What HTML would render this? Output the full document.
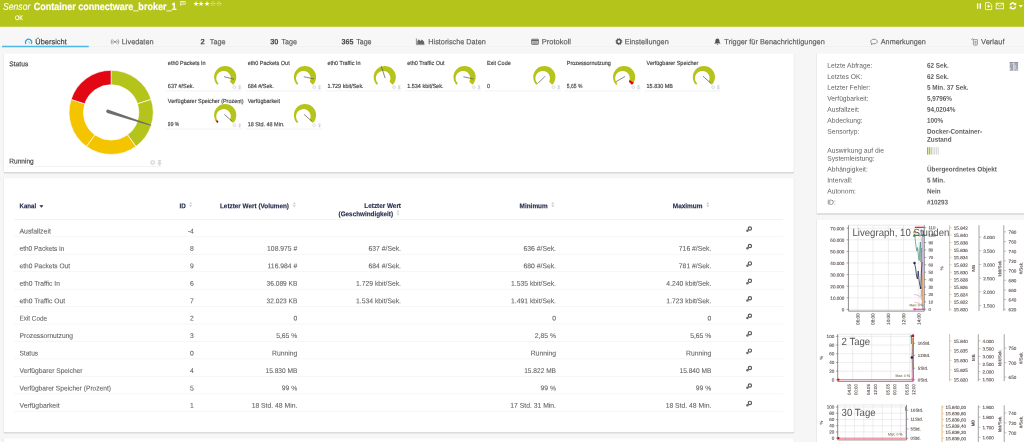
<!DOCTYPE html>
<html lang="de">
<head>
<meta charset="utf-8">
<title>Sensor Container connectware_broker_1</title>
<style>
html,body{margin:0;padding:0;}
body{width:1024px;height:442px;overflow:hidden;background:#f6f6f6;font-family:"Liberation Sans",sans-serif;position:relative;-webkit-text-size-adjust:none;}
#app{position:absolute;left:0;top:0;width:1024px;height:442px;overflow:hidden;will-change:transform;}
#app svg{position:absolute;left:0;top:0;overflow:hidden;}
svg text{font-family:"Liberation Sans",sans-serif;}
</style>
</head>
<body>
<div id="app">
<div class="surfaces"><svg width="1024" height="442" viewBox="0 0 1024 442"><rect x="0.00" y="0.00" width="1024.00" height="26.90" fill="#b5c41b"/><rect x="0.00" y="26.90" width="1024.00" height="19.90" fill="#f7f7f7"/><rect x="0.00" y="46.40" width="1024.00" height="0.70" fill="#efefef"/><rect x="2.00" y="45.75" width="86.80" height="1.50" fill="#4db8e8"/><rect x="3.30" y="53.40" width="791.20" height="119.40" fill="#000" opacity="0.035" rx="0.6"/><rect x="3.80" y="54.10" width="790.20" height="119.40" fill="#000" opacity="0.12" rx="0.5"/><rect x="4.00" y="53.60" width="789.80" height="118.50" fill="#fff"/><rect x="3.30" y="177.90" width="791.20" height="255.00" fill="#000" opacity="0.035" rx="0.6"/><rect x="3.80" y="178.60" width="790.20" height="255.00" fill="#000" opacity="0.12" rx="0.5"/><rect x="4.00" y="178.10" width="789.80" height="254.10" fill="#fff"/><rect x="3.30" y="438.20" width="791.20" height="20.90" fill="#000" opacity="0.035" rx="0.6"/><rect x="3.80" y="438.90" width="790.20" height="20.90" fill="#000" opacity="0.12" rx="0.5"/><rect x="4.00" y="438.40" width="789.80" height="20.00" fill="#fff"/><rect x="816.20" y="53.40" width="216.40" height="160.60" fill="#000" opacity="0.035" rx="0.6"/><rect x="816.70" y="54.10" width="215.40" height="160.60" fill="#000" opacity="0.12" rx="0.5"/><rect x="816.90" y="53.60" width="215.00" height="159.70" fill="#fff"/><rect x="816.20" y="219.35" width="216.40" height="230.90" fill="#000" opacity="0.035" rx="0.6"/><rect x="816.70" y="220.05" width="215.40" height="230.90" fill="#000" opacity="0.12" rx="0.5"/><rect x="816.90" y="219.55" width="215.00" height="230.00" fill="#fff"/><rect x="7.00" y="166.10" width="155.40" height="0.70" fill="#eeeeee"/><rect x="166.00" y="90.50" width="76.00" height="0.80" fill="#efefef"/><rect x="245.78" y="90.50" width="76.00" height="0.80" fill="#efefef"/><rect x="325.56" y="90.50" width="76.00" height="0.80" fill="#efefef"/><rect x="405.34" y="90.50" width="76.00" height="0.80" fill="#efefef"/><rect x="485.12" y="90.50" width="76.00" height="0.80" fill="#efefef"/><rect x="564.90" y="90.50" width="76.00" height="0.80" fill="#efefef"/><rect x="644.68" y="90.50" width="76.00" height="0.80" fill="#efefef"/><rect x="166.00" y="128.65" width="76.00" height="0.80" fill="#efefef"/><rect x="245.78" y="128.65" width="76.00" height="0.80" fill="#efefef"/><rect x="14.00" y="219.10" width="769.00" height="0.60" fill="#ebebeb"/><rect x="14.00" y="236.49" width="769.00" height="0.70" fill="#f2f2f2"/><rect x="14.00" y="253.93" width="769.00" height="0.70" fill="#f2f2f2"/><rect x="14.00" y="271.37" width="769.00" height="0.70" fill="#f2f2f2"/><rect x="14.00" y="288.81" width="769.00" height="0.70" fill="#f2f2f2"/><rect x="14.00" y="306.25" width="769.00" height="0.70" fill="#f2f2f2"/><rect x="14.00" y="323.69" width="769.00" height="0.70" fill="#f2f2f2"/><rect x="14.00" y="341.13" width="769.00" height="0.70" fill="#f2f2f2"/><rect x="14.00" y="358.57" width="769.00" height="0.70" fill="#f2f2f2"/><rect x="14.00" y="376.01" width="769.00" height="0.70" fill="#f2f2f2"/><rect x="14.00" y="393.45" width="769.00" height="0.70" fill="#f2f2f2"/><rect x="14.00" y="410.89" width="769.00" height="0.70" fill="#f2f2f2"/><rect x="927.00" y="147.20" width="1.20" height="7.40" fill="#9cbb1c"/><rect x="928.78" y="147.20" width="1.20" height="7.40" fill="#a9c332"/><rect x="930.56" y="147.20" width="1.20" height="7.40" fill="#b9cf5c"/><rect x="932.34" y="147.20" width="1.20" height="7.40" fill="#d9d9d9"/><rect x="934.12" y="147.20" width="1.20" height="7.40" fill="#d9d9d9"/><rect x="935.90" y="147.20" width="1.20" height="7.40" fill="#d9d9d9"/><rect x="937.68" y="147.20" width="1.20" height="7.40" fill="#d9d9d9"/></svg></div>
<header><svg width="1024" height="442" viewBox="0 0 1024 442">
<text transform="translate(3.10 9.83) rotate(0.03) scale(0.8942 1)" font-size="9.6" fill="#fff" font-style="italic" stroke="#fff" stroke-width="0.12">Sensor</text>
<text transform="translate(33.70 10.37) rotate(0.03) scale(0.8759 1)" font-size="10.3" fill="#fff" font-weight="700" stroke="#fff" stroke-width="0.2">Container connectware_broker_1</text>
<text transform="translate(14.90 20.42) rotate(0.03) scale(0.8651 1)" font-size="6.4" fill="#fff" stroke="#fff" stroke-width="0.15">OK</text>
</svg></header>
<nav><svg width="1024" height="442" viewBox="0 0 1024 442">
<text transform="translate(35.30 44.23) rotate(0.03) scale(0.9813 1)" font-size="7.6" fill="#3a3a3a" stroke="#3a3a3a" stroke-width="0.16">Übersicht</text>
<text transform="translate(121.80 44.23) rotate(0.03) scale(0.9632 1)" font-size="7.6" fill="#5a5a5a" stroke="#5a5a5a" stroke-width="0.16">Livedaten</text>
<text transform="translate(209.80 44.23) rotate(0.03) scale(0.9557 1)" font-size="7.6" fill="#5a5a5a" stroke="#5a5a5a" stroke-width="0.16">Tage</text>
<text transform="translate(200.50 44.23) rotate(0.03) scale(1.0000 1)" font-size="7.6" fill="#4a4a4a" font-weight="700" stroke="#4a4a4a" stroke-width="0.12">2</text>
<text transform="translate(281.55 44.23) rotate(0.03) scale(0.9405 1)" font-size="7.6" fill="#5a5a5a" stroke="#5a5a5a" stroke-width="0.16">Tage</text>
<text transform="translate(270.25 44.23) rotate(0.03) scale(0.9759 1)" font-size="7.6" fill="#4a4a4a" font-weight="700" stroke="#4a4a4a" stroke-width="0.12">30</text>
<text transform="translate(356.30 44.23) rotate(0.03) scale(0.9253 1)" font-size="7.6" fill="#5a5a5a" stroke="#5a5a5a" stroke-width="0.16">Tage</text>
<text transform="translate(341.50 44.23) rotate(0.03) scale(0.9463 1)" font-size="7.6" fill="#4a4a4a" font-weight="700" stroke="#4a4a4a" stroke-width="0.12">365</text>
<text transform="translate(428.30 44.23) rotate(0.03) scale(0.9586 1)" font-size="7.6" fill="#5a5a5a" stroke="#5a5a5a" stroke-width="0.16">Historische Daten</text>
<text transform="translate(541.80 44.23) rotate(0.03) scale(0.9892 1)" font-size="7.6" fill="#5a5a5a" stroke="#5a5a5a" stroke-width="0.16">Protokoll</text>
<text transform="translate(624.80 44.23) rotate(0.03) scale(0.9642 1)" font-size="7.6" fill="#5a5a5a" stroke="#5a5a5a" stroke-width="0.16">Einstellungen</text>
<text transform="translate(724.30 44.23) rotate(0.03) scale(0.9657 1)" font-size="7.6" fill="#5a5a5a" stroke="#5a5a5a" stroke-width="0.16">Trigger für Benachrichtigungen</text>
<text transform="translate(880.80 44.23) rotate(0.03) scale(0.9510 1)" font-size="7.6" fill="#5a5a5a" stroke="#5a5a5a" stroke-width="0.16">Anmerkungen</text>
<text transform="translate(981.05 44.23) rotate(0.03) scale(0.9931 1)" font-size="7.6" fill="#5a5a5a" stroke="#5a5a5a" stroke-width="0.16">Verlauf</text>
</svg></nav>
<main>
<section class="status"><svg width="1024" height="442" viewBox="0 0 1024 442">
<text transform="translate(9.30 66.30) rotate(0.03) scale(0.9671 1)" font-size="6.93" fill="#404040" stroke="#404040" stroke-width="0.16">Status</text>
<text transform="translate(9.30 163.40) rotate(0.03) scale(0.9490 1)" font-size="6.93" fill="#404040" stroke="#404040" stroke-width="0.16">Running</text>
</svg></section>
<section class="gauges"><svg width="1024" height="442" viewBox="0 0 1024 442">
<text transform="translate(167.85 64.94) rotate(0.03) scale(0.9300 1)" font-size="5.9" fill="#404040" stroke="#404040" stroke-width="0.16">eth0 Packets In</text>
<text transform="translate(167.85 88.04) rotate(0.03) scale(0.9300 1)" font-size="5.9" fill="#404040" stroke="#404040" stroke-width="0.16">637 #/Sek.</text>
<text transform="translate(247.63 64.94) rotate(0.03) scale(0.9300 1)" font-size="5.9" fill="#404040" stroke="#404040" stroke-width="0.16">eth0 Packets Out</text>
<text transform="translate(247.63 88.04) rotate(0.03) scale(0.9300 1)" font-size="5.9" fill="#404040" stroke="#404040" stroke-width="0.16">684 #/Sek.</text>
<text transform="translate(327.41 64.94) rotate(0.03) scale(0.9300 1)" font-size="5.9" fill="#404040" stroke="#404040" stroke-width="0.16">eth0 Traffic In</text>
<text transform="translate(327.41 88.04) rotate(0.03) scale(0.9300 1)" font-size="5.9" fill="#404040" stroke="#404040" stroke-width="0.16">1.729 kbit/Sek.</text>
<text transform="translate(407.19 64.94) rotate(0.03) scale(0.9300 1)" font-size="5.9" fill="#404040" stroke="#404040" stroke-width="0.16">eth0 Traffic Out</text>
<text transform="translate(407.19 88.04) rotate(0.03) scale(0.9300 1)" font-size="5.9" fill="#404040" stroke="#404040" stroke-width="0.16">1.534 kbit/Sek.</text>
<text transform="translate(486.97 64.94) rotate(0.03) scale(0.9300 1)" font-size="5.9" fill="#404040" stroke="#404040" stroke-width="0.16">Exit Code</text>
<text transform="translate(486.97 88.04) rotate(0.03) scale(0.9300 1)" font-size="5.9" fill="#404040" stroke="#404040" stroke-width="0.16">0</text>
<text transform="translate(566.75 64.94) rotate(0.03) scale(0.9300 1)" font-size="5.9" fill="#404040" stroke="#404040" stroke-width="0.16">Prozessornutzung</text>
<text transform="translate(566.75 88.04) rotate(0.03) scale(0.8500 1)" font-size="5.9" fill="#404040" stroke="#404040" stroke-width="0.16">5,65 %</text>
<text transform="translate(646.53 64.94) rotate(0.03) scale(0.9300 1)" font-size="5.9" fill="#404040" stroke="#404040" stroke-width="0.16">Verfügbarer Speicher</text>
<text transform="translate(646.53 88.04) rotate(0.03) scale(0.9300 1)" font-size="5.9" fill="#404040" stroke="#404040" stroke-width="0.16">15.830 MB</text>
<text transform="translate(167.85 103.09) rotate(0.03) scale(0.9300 1)" font-size="5.9" fill="#404040" stroke="#404040" stroke-width="0.16">Verfügbarer Speicher (Prozent)</text>
<text transform="translate(167.85 126.19) rotate(0.03) scale(0.8500 1)" font-size="5.9" fill="#404040" stroke="#404040" stroke-width="0.16">99 %</text>
<text transform="translate(247.63 103.09) rotate(0.03) scale(0.9300 1)" font-size="5.9" fill="#404040" stroke="#404040" stroke-width="0.16">Verfügbarkeit</text>
<text transform="translate(247.63 126.19) rotate(0.03) scale(0.9300 1)" font-size="5.9" fill="#404040" stroke="#404040" stroke-width="0.16">18 Std. 48 Min.</text>
</svg></section>
<section class="channels"><svg width="1024" height="442" viewBox="0 0 1024 442">
<text transform="translate(19.50 208.35) rotate(0.03) scale(0.8876 1)" font-size="6.93" fill="#222a4a" font-weight="700" stroke="#222a4a" stroke-width="0.12">Kanal</text>
<text transform="translate(185.75 208.35) rotate(0.03) scale(0.9019 1)" font-size="6.93" fill="#222a4a" font-weight="700" stroke="#222a4a" stroke-width="0.12" text-anchor="end">ID</text>
<text transform="translate(289.00 208.35) rotate(0.03) scale(0.9200 1)" font-size="6.93" fill="#222a4a" font-weight="700" stroke="#222a4a" stroke-width="0.12" text-anchor="end">Letzter Wert (Volumen)</text>
<text transform="translate(401.00 208.00) rotate(0.03) scale(0.9200 1)" font-size="6.93" fill="#222a4a" font-weight="700" stroke="#222a4a" stroke-width="0.12" text-anchor="end">Letzter Wert</text>
<text transform="translate(393.00 216.25) rotate(0.03) scale(0.9131 1)" font-size="6.93" fill="#222a4a" font-weight="700" stroke="#222a4a" stroke-width="0.12" text-anchor="end">(Geschwindigkeit)</text>
<text transform="translate(547.75 208.35) rotate(0.03) scale(0.9289 1)" font-size="6.93" fill="#222a4a" font-weight="700" stroke="#222a4a" stroke-width="0.12" text-anchor="end">Minimum</text>
<text transform="translate(702.50 208.35) rotate(0.03) scale(0.9307 1)" font-size="6.93" fill="#222a4a" font-weight="700" stroke="#222a4a" stroke-width="0.12" text-anchor="end">Maximum</text>
<text transform="translate(19.50 233.42) rotate(0.03) scale(0.9941 1)" font-size="6.93" fill="#626262" stroke="#626262" stroke-width="0.08">Ausfallzeit</text>
<text transform="translate(193.90 233.42) rotate(0.03) scale(0.9800 1)" font-size="6.93" fill="#626262" stroke="#626262" stroke-width="0.08" text-anchor="end">-4</text>
<text transform="translate(19.50 250.86) rotate(0.03) scale(0.9441 1)" font-size="6.93" fill="#626262" stroke="#626262" stroke-width="0.08">eth0 Packets In</text>
<text transform="translate(193.90 250.86) rotate(0.03) scale(0.9800 1)" font-size="6.93" fill="#626262" stroke="#626262" stroke-width="0.08" text-anchor="end">8</text>
<text transform="translate(297.30 250.86) rotate(0.03) scale(0.9800 1)" font-size="6.93" fill="#626262" stroke="#626262" stroke-width="0.08" text-anchor="end">108.975 #</text>
<text transform="translate(401.00 250.86) rotate(0.03) scale(0.9800 1)" font-size="6.93" fill="#626262" stroke="#626262" stroke-width="0.08" text-anchor="end">637 #/Sek.</text>
<text transform="translate(556.00 250.86) rotate(0.03) scale(0.9800 1)" font-size="6.93" fill="#626262" stroke="#626262" stroke-width="0.08" text-anchor="end">636 #/Sek.</text>
<text transform="translate(711.30 250.86) rotate(0.03) scale(0.9800 1)" font-size="6.93" fill="#626262" stroke="#626262" stroke-width="0.08" text-anchor="end">716 #/Sek.</text>
<text transform="translate(19.50 268.30) rotate(0.03) scale(0.9519 1)" font-size="6.93" fill="#626262" stroke="#626262" stroke-width="0.08">eth0 Packets Out</text>
<text transform="translate(193.90 268.30) rotate(0.03) scale(0.9800 1)" font-size="6.93" fill="#626262" stroke="#626262" stroke-width="0.08" text-anchor="end">9</text>
<text transform="translate(297.30 268.30) rotate(0.03) scale(0.9800 1)" font-size="6.93" fill="#626262" stroke="#626262" stroke-width="0.08" text-anchor="end">116.984 #</text>
<text transform="translate(401.00 268.30) rotate(0.03) scale(0.9800 1)" font-size="6.93" fill="#626262" stroke="#626262" stroke-width="0.08" text-anchor="end">684 #/Sek.</text>
<text transform="translate(556.00 268.30) rotate(0.03) scale(0.9800 1)" font-size="6.93" fill="#626262" stroke="#626262" stroke-width="0.08" text-anchor="end">680 #/Sek.</text>
<text transform="translate(711.30 268.30) rotate(0.03) scale(0.9800 1)" font-size="6.93" fill="#626262" stroke="#626262" stroke-width="0.08" text-anchor="end">781 #/Sek.</text>
<text transform="translate(19.50 285.74) rotate(0.03) scale(0.9675 1)" font-size="6.93" fill="#626262" stroke="#626262" stroke-width="0.08">eth0 Traffic In</text>
<text transform="translate(193.90 285.74) rotate(0.03) scale(0.9800 1)" font-size="6.93" fill="#626262" stroke="#626262" stroke-width="0.08" text-anchor="end">6</text>
<text transform="translate(297.30 285.74) rotate(0.03) scale(0.9500 1)" font-size="6.93" fill="#626262" stroke="#626262" stroke-width="0.08" text-anchor="end">36.089 KB</text>
<text transform="translate(401.00 285.74) rotate(0.03) scale(0.9800 1)" font-size="6.93" fill="#626262" stroke="#626262" stroke-width="0.08" text-anchor="end">1.729 kbit/Sek.</text>
<text transform="translate(556.00 285.74) rotate(0.03) scale(0.9800 1)" font-size="6.93" fill="#626262" stroke="#626262" stroke-width="0.08" text-anchor="end">1.535 kbit/Sek.</text>
<text transform="translate(711.30 285.74) rotate(0.03) scale(0.9800 1)" font-size="6.93" fill="#626262" stroke="#626262" stroke-width="0.08" text-anchor="end">4.240 kbit/Sek.</text>
<text transform="translate(19.50 303.18) rotate(0.03) scale(0.9650 1)" font-size="6.93" fill="#626262" stroke="#626262" stroke-width="0.08">eth0 Traffic Out</text>
<text transform="translate(193.90 303.18) rotate(0.03) scale(0.9800 1)" font-size="6.93" fill="#626262" stroke="#626262" stroke-width="0.08" text-anchor="end">7</text>
<text transform="translate(297.30 303.18) rotate(0.03) scale(0.9500 1)" font-size="6.93" fill="#626262" stroke="#626262" stroke-width="0.08" text-anchor="end">32.023 KB</text>
<text transform="translate(401.00 303.18) rotate(0.03) scale(0.9800 1)" font-size="6.93" fill="#626262" stroke="#626262" stroke-width="0.08" text-anchor="end">1.534 kbit/Sek.</text>
<text transform="translate(556.00 303.18) rotate(0.03) scale(0.9800 1)" font-size="6.93" fill="#626262" stroke="#626262" stroke-width="0.08" text-anchor="end">1.491 kbit/Sek.</text>
<text transform="translate(711.30 303.18) rotate(0.03) scale(0.9800 1)" font-size="6.93" fill="#626262" stroke="#626262" stroke-width="0.08" text-anchor="end">1.723 kbit/Sek.</text>
<text transform="translate(19.50 320.62) rotate(0.03) scale(0.9186 1)" font-size="6.93" fill="#626262" stroke="#626262" stroke-width="0.08">Exit Code</text>
<text transform="translate(193.90 320.62) rotate(0.03) scale(0.9800 1)" font-size="6.93" fill="#626262" stroke="#626262" stroke-width="0.08" text-anchor="end">2</text>
<text transform="translate(297.30 320.62) rotate(0.03) scale(0.9800 1)" font-size="6.93" fill="#626262" stroke="#626262" stroke-width="0.08" text-anchor="end">0</text>
<text transform="translate(556.00 320.62) rotate(0.03) scale(0.9800 1)" font-size="6.93" fill="#626262" stroke="#626262" stroke-width="0.08" text-anchor="end">0</text>
<text transform="translate(711.30 320.62) rotate(0.03) scale(0.9800 1)" font-size="6.93" fill="#626262" stroke="#626262" stroke-width="0.08" text-anchor="end">0</text>
<text transform="translate(19.50 338.06) rotate(0.03) scale(0.9596 1)" font-size="6.93" fill="#626262" stroke="#626262" stroke-width="0.08">Prozessornutzung</text>
<text transform="translate(193.90 338.06) rotate(0.03) scale(0.9800 1)" font-size="6.93" fill="#626262" stroke="#626262" stroke-width="0.08" text-anchor="end">3</text>
<text transform="translate(297.30 338.06) rotate(0.03) scale(0.9800 1)" font-size="6.93" fill="#626262" stroke="#626262" stroke-width="0.08" text-anchor="end">5,65 %</text>
<text transform="translate(556.00 338.06) rotate(0.03) scale(0.9800 1)" font-size="6.93" fill="#626262" stroke="#626262" stroke-width="0.08" text-anchor="end">2,85 %</text>
<text transform="translate(711.30 338.06) rotate(0.03) scale(0.9800 1)" font-size="6.93" fill="#626262" stroke="#626262" stroke-width="0.08" text-anchor="end">5,65 %</text>
<text transform="translate(19.50 355.50) rotate(0.03) scale(0.9467 1)" font-size="6.93" fill="#626262" stroke="#626262" stroke-width="0.08">Status</text>
<text transform="translate(193.90 355.50) rotate(0.03) scale(0.9800 1)" font-size="6.93" fill="#626262" stroke="#626262" stroke-width="0.08" text-anchor="end">0</text>
<text transform="translate(297.30 355.50) rotate(0.03) scale(0.9800 1)" font-size="6.93" fill="#626262" stroke="#626262" stroke-width="0.08" text-anchor="end">Running</text>
<text transform="translate(556.00 355.50) rotate(0.03) scale(0.9800 1)" font-size="6.93" fill="#626262" stroke="#626262" stroke-width="0.08" text-anchor="end">Running</text>
<text transform="translate(711.30 355.50) rotate(0.03) scale(0.9800 1)" font-size="6.93" fill="#626262" stroke="#626262" stroke-width="0.08" text-anchor="end">Running</text>
<text transform="translate(19.50 372.94) rotate(0.03) scale(0.9635 1)" font-size="6.93" fill="#626262" stroke="#626262" stroke-width="0.08">Verfügbarer Speicher</text>
<text transform="translate(193.90 372.94) rotate(0.03) scale(0.9800 1)" font-size="6.93" fill="#626262" stroke="#626262" stroke-width="0.08" text-anchor="end">4</text>
<text transform="translate(297.30 372.94) rotate(0.03) scale(0.9500 1)" font-size="6.93" fill="#626262" stroke="#626262" stroke-width="0.08" text-anchor="end">15.830 MB</text>
<text transform="translate(556.00 372.94) rotate(0.03) scale(0.9500 1)" font-size="6.93" fill="#626262" stroke="#626262" stroke-width="0.08" text-anchor="end">15.822 MB</text>
<text transform="translate(711.30 372.94) rotate(0.03) scale(0.9500 1)" font-size="6.93" fill="#626262" stroke="#626262" stroke-width="0.08" text-anchor="end">15.840 MB</text>
<text transform="translate(19.50 390.38) rotate(0.03) scale(0.9550 1)" font-size="6.93" fill="#626262" stroke="#626262" stroke-width="0.08">Verfügbarer Speicher (Prozent)</text>
<text transform="translate(193.90 390.38) rotate(0.03) scale(0.9800 1)" font-size="6.93" fill="#626262" stroke="#626262" stroke-width="0.08" text-anchor="end">5</text>
<text transform="translate(297.30 390.38) rotate(0.03) scale(0.9800 1)" font-size="6.93" fill="#626262" stroke="#626262" stroke-width="0.08" text-anchor="end">99 %</text>
<text transform="translate(556.00 390.38) rotate(0.03) scale(0.9800 1)" font-size="6.93" fill="#626262" stroke="#626262" stroke-width="0.08" text-anchor="end">99 %</text>
<text transform="translate(711.30 390.38) rotate(0.03) scale(0.9800 1)" font-size="6.93" fill="#626262" stroke="#626262" stroke-width="0.08" text-anchor="end">99 %</text>
<text transform="translate(19.50 407.82) rotate(0.03) scale(0.9819 1)" font-size="6.93" fill="#626262" stroke="#626262" stroke-width="0.08">Verfügbarkeit</text>
<text transform="translate(193.90 407.82) rotate(0.03) scale(0.9800 1)" font-size="6.93" fill="#626262" stroke="#626262" stroke-width="0.08" text-anchor="end">1</text>
<text transform="translate(297.30 407.82) rotate(0.03) scale(0.9800 1)" font-size="6.93" fill="#626262" stroke="#626262" stroke-width="0.08" text-anchor="end">18 Std. 48 Min.</text>
<text transform="translate(556.00 407.82) rotate(0.03) scale(0.9800 1)" font-size="6.93" fill="#626262" stroke="#626262" stroke-width="0.08" text-anchor="end">17 Std. 31 Min.</text>
<text transform="translate(711.30 407.82) rotate(0.03) scale(0.9800 1)" font-size="6.93" fill="#626262" stroke="#626262" stroke-width="0.08" text-anchor="end">18 Std. 48 Min.</text>
</svg></section>
</main>
<aside class="info"><svg width="1024" height="442" viewBox="0 0 1024 442">
<text transform="translate(827.20 67.75) rotate(0.03) scale(0.9700 1)" font-size="6.93" fill="#646464">Letzte Abfrage:</text>
<text transform="translate(927.00 67.75) rotate(0.03) scale(0.9150 1)" font-size="6.93" fill="#5e5e5e" font-weight="700">62 Sek.</text>
<text transform="translate(827.20 78.95) rotate(0.03) scale(0.9700 1)" font-size="6.93" fill="#646464">Letztes OK:</text>
<text transform="translate(927.00 78.95) rotate(0.03) scale(0.9150 1)" font-size="6.93" fill="#5e5e5e" font-weight="700">62 Sek.</text>
<text transform="translate(827.20 89.85) rotate(0.03) scale(0.9700 1)" font-size="6.93" fill="#646464">Letzter Fehler:</text>
<text transform="translate(927.00 89.85) rotate(0.03) scale(0.9150 1)" font-size="6.93" fill="#5e5e5e" font-weight="700">5 Min. 37 Sek.</text>
<text transform="translate(827.20 100.85) rotate(0.03) scale(0.9700 1)" font-size="6.93" fill="#646464">Verfügbarkeit:</text>
<text transform="translate(927.00 100.85) rotate(0.03) scale(0.9150 1)" font-size="6.93" fill="#5e5e5e" font-weight="700">5,9796%</text>
<text transform="translate(827.20 111.75) rotate(0.03) scale(0.9700 1)" font-size="6.93" fill="#646464">Ausfallzeit:</text>
<text transform="translate(927.00 111.75) rotate(0.03) scale(0.9150 1)" font-size="6.93" fill="#5e5e5e" font-weight="700">94,0204%</text>
<text transform="translate(827.20 122.75) rotate(0.03) scale(0.9700 1)" font-size="6.93" fill="#646464">Abdeckung:</text>
<text transform="translate(927.00 122.75) rotate(0.03) scale(0.9150 1)" font-size="6.93" fill="#5e5e5e" font-weight="700">100%</text>
<text transform="translate(827.20 133.65) rotate(0.03) scale(0.9700 1)" font-size="6.93" fill="#646464">Sensortyp:</text>
<text transform="translate(927.00 133.65) rotate(0.03) scale(0.9150 1)" font-size="6.93" fill="#5e5e5e" font-weight="700">Docker-Container-</text>
<text transform="translate(927.00 141.75) rotate(0.03) scale(0.9150 1)" font-size="6.93" fill="#5e5e5e" font-weight="700">Zustand</text>
<text transform="translate(827.20 152.75) rotate(0.03) scale(0.9700 1)" font-size="6.93" fill="#646464">Auswirkung auf die</text>
<text transform="translate(827.20 160.85) rotate(0.03) scale(0.9700 1)" font-size="6.93" fill="#646464">Systemleistung:</text>
<text transform="translate(827.20 171.55) rotate(0.03) scale(0.9700 1)" font-size="6.93" fill="#646464">Abhängigkeit:</text>
<text transform="translate(927.00 171.55) rotate(0.03) scale(0.9150 1)" font-size="6.93" fill="#5e5e5e" font-weight="700">Übergeordnetes Objekt</text>
<text transform="translate(827.20 182.55) rotate(0.03) scale(0.9700 1)" font-size="6.93" fill="#646464">Intervall:</text>
<text transform="translate(927.00 182.55) rotate(0.03) scale(0.9150 1)" font-size="6.93" fill="#5e5e5e" font-weight="700">5 Min.</text>
<text transform="translate(827.20 193.45) rotate(0.03) scale(0.9700 1)" font-size="6.93" fill="#646464">Autonom:</text>
<text transform="translate(927.00 193.45) rotate(0.03) scale(0.9150 1)" font-size="6.93" fill="#5e5e5e" font-weight="700">Nein</text>
<text transform="translate(827.20 204.45) rotate(0.03) scale(0.9700 1)" font-size="6.93" fill="#646464">ID:</text>
<text transform="translate(927.00 204.45) rotate(0.03) scale(0.9150 1)" font-size="6.93" fill="#5e5e5e" font-weight="700">#10293</text>
</svg></aside>
<div class="fav"><svg width="1024" height="442" viewBox="0 0 1024 442">
<text transform="translate(192.70 6.36) rotate(0.03) scale(1.0000 1)" font-size="6.8" fill="#fff" font-family="DejaVu Sans, sans-serif">★</text>
<text transform="translate(198.42 6.36) rotate(0.03) scale(1.0000 1)" font-size="6.8" fill="#fff" font-family="DejaVu Sans, sans-serif">★</text>
<text transform="translate(204.14 6.36) rotate(0.03) scale(1.0000 1)" font-size="6.8" fill="#fff" font-family="DejaVu Sans, sans-serif">★</text>
<text transform="translate(209.86 6.36) rotate(0.03) scale(1.0000 1)" font-size="6.8" fill="#fff" font-family="DejaVu Sans, sans-serif">☆</text>
<text transform="translate(215.58 6.36) rotate(0.03) scale(1.0000 1)" font-size="6.8" fill="#fff" font-family="DejaVu Sans, sans-serif">☆</text>
</svg></div>
<div class="graphics"><svg width="1024" height="442" viewBox="0 0 1024 442"><path d="M111.15 70.30A42.1 42.1 0 0 1 151.19 99.39L137.49 103.84A27.7 27.7 0 0 0 111.15 84.70Z" fill="#b5c41b" stroke="#fff" stroke-width="0.7"/><path d="M151.19 99.39A42.1 42.1 0 0 1 135.90 146.46L127.43 134.81A27.7 27.7 0 0 0 137.49 103.84Z" fill="#b5c41b" stroke="#fff" stroke-width="0.7"/><path d="M135.90 146.46A42.1 42.1 0 0 1 86.40 146.46L94.87 134.81A27.7 27.7 0 0 0 127.43 134.81Z" fill="#f5c400" stroke="#fff" stroke-width="0.7"/><path d="M86.40 146.46A42.1 42.1 0 0 1 71.11 99.39L84.81 103.84A27.7 27.7 0 0 0 94.87 134.81Z" fill="#f5c400" stroke="#fff" stroke-width="0.7"/><path d="M71.11 99.39A42.1 42.1 0 0 1 111.15 70.30L111.15 84.70A27.7 27.7 0 0 0 84.81 103.84Z" fill="#e30613" stroke="#fff" stroke-width="0.7"/><path d="M107.36 113.06L150.56 125.73L150.87 124.78L108.47 109.64A1.8 1.8 0 0 0 107.36 113.06Z" fill="#6e6e6e"/><circle cx="152.70" cy="162.50" r="1.70" fill="none" stroke="#d6d9e0" stroke-width="1.20"/><circle cx="152.70" cy="162.50" r="2.40" fill="none" stroke="#d6d9e0" stroke-width="0.60" stroke-dasharray="0.80 1.08"/><path d="M157.80 160.00h3.40v0.80h-0.50v2.20l0.90 0.90v0.50h-1.70v1.70h-0.80v-1.70h-1.70v-0.50l0.90 -0.90v-2.20h-0.50z" fill="#d6d9e0"/><path d="M217.35 84.85A11.1 11.1 0 1 1 233.05 84.85L229.99 81.79A7.35 7.35 0 1 0 218.56 83.64Z" fill="#b5c41b"/><line x1="224.04" y1="76.71" x2="234.13" y2="79.23" stroke="#484848" stroke-width="0.65"/><circle cx="234.40" cy="87.20" r="1.27" fill="none" stroke="#d6d9e0" stroke-width="0.90"/><circle cx="234.40" cy="87.20" r="1.80" fill="none" stroke="#d6d9e0" stroke-width="0.45" stroke-dasharray="0.60 0.81"/><path d="M238.38 85.33h2.55v0.60h-0.38v1.65l0.68 0.68v0.38h-1.27v1.27h-0.60v-1.27h-1.27v-0.38l0.68 -0.68v-1.65h-0.38z" fill="#d6d9e0"/><path d="M297.13 84.85A11.1 11.1 0 1 1 312.83 84.85L309.77 81.79A7.35 7.35 0 1 0 298.34 83.64Z" fill="#b5c41b"/><line x1="303.81" y1="76.75" x2="313.98" y2="78.91" stroke="#484848" stroke-width="0.65"/><circle cx="314.18" cy="87.20" r="1.27" fill="none" stroke="#d6d9e0" stroke-width="0.90"/><circle cx="314.18" cy="87.20" r="1.80" fill="none" stroke="#d6d9e0" stroke-width="0.45" stroke-dasharray="0.60 0.81"/><path d="M318.16 85.33h2.55v0.60h-0.38v1.65l0.68 0.68v0.38h-1.27v1.27h-0.60v-1.27h-1.27v-0.38l0.68 -0.68v-1.65h-0.38z" fill="#d6d9e0"/><path d="M376.91 84.85A11.1 11.1 0 1 1 392.61 84.85L389.55 81.79A7.35 7.35 0 1 0 378.12 83.64Z" fill="#b5c41b"/><line x1="385.13" y1="78.14" x2="381.30" y2="66.35" stroke="#484848" stroke-width="0.65"/><circle cx="393.96" cy="87.20" r="1.27" fill="none" stroke="#d6d9e0" stroke-width="0.90"/><circle cx="393.96" cy="87.20" r="1.80" fill="none" stroke="#d6d9e0" stroke-width="0.45" stroke-dasharray="0.60 0.81"/><path d="M397.94 85.33h2.55v0.60h-0.38v1.65l0.68 0.68v0.38h-1.27v1.27h-0.60v-1.27h-1.27v-0.38l0.68 -0.68v-1.65h-0.38z" fill="#d6d9e0"/><path d="M456.69 84.85A11.1 11.1 0 1 1 472.39 84.85L469.33 81.79A7.35 7.35 0 1 0 457.90 83.64Z" fill="#b5c41b"/><line x1="463.37" y1="76.75" x2="473.54" y2="78.91" stroke="#484848" stroke-width="0.65"/><circle cx="473.74" cy="87.20" r="1.27" fill="none" stroke="#d6d9e0" stroke-width="0.90"/><circle cx="473.74" cy="87.20" r="1.80" fill="none" stroke="#d6d9e0" stroke-width="0.45" stroke-dasharray="0.60 0.81"/><path d="M477.72 85.33h2.55v0.60h-0.38v1.65l0.68 0.68v0.38h-1.27v1.27h-0.60v-1.27h-1.27v-0.38l0.68 -0.68v-1.65h-0.38z" fill="#d6d9e0"/><path d="M536.47 84.85A11.1 11.1 0 1 1 552.17 84.85L549.11 81.79A7.35 7.35 0 1 0 537.68 83.64Z" fill="#b5c41b"/><line x1="545.17" y1="76.15" x2="537.81" y2="83.51" stroke="#484848" stroke-width="0.65"/><circle cx="553.52" cy="87.20" r="1.27" fill="none" stroke="#d6d9e0" stroke-width="0.90"/><circle cx="553.52" cy="87.20" r="1.80" fill="none" stroke="#d6d9e0" stroke-width="0.45" stroke-dasharray="0.60 0.81"/><path d="M557.50 85.33h2.55v0.60h-0.38v1.65l0.68 0.68v0.38h-1.27v1.27h-0.60v-1.27h-1.27v-0.38l0.68 -0.68v-1.65h-0.38z" fill="#d6d9e0"/><path d="M616.25 84.85A11.1 11.1 0 1 1 631.95 84.85L628.89 81.79A7.35 7.35 0 1 0 617.46 83.64Z" fill="#b5c41b"/><path d="M633.81 82.38A11.1 11.1 0 0 1 631.95 84.85L628.89 81.79A7.35 7.35 0 0 0 629.58 80.04Z" fill="#e30613"/><path d="M616.25 84.85A11.1 11.1 0 0 1 615.35 83.83L616.68 82.80A7.35 7.35 0 0 0 617.46 83.64Z" fill="#f5c400"/><line x1="625.14" y1="76.40" x2="616.13" y2="81.60" stroke="#484848" stroke-width="0.65"/><circle cx="633.30" cy="87.20" r="1.27" fill="none" stroke="#d6d9e0" stroke-width="0.90"/><circle cx="633.30" cy="87.20" r="1.80" fill="none" stroke="#d6d9e0" stroke-width="0.45" stroke-dasharray="0.60 0.81"/><path d="M637.27 85.33h2.55v0.60h-0.38v1.65l0.68 0.68v0.38h-1.27v1.27h-0.60v-1.27h-1.27v-0.38l0.68 -0.68v-1.65h-0.38z" fill="#d6d9e0"/><path d="M696.03 84.85A11.1 11.1 0 1 1 711.73 84.85L708.67 81.79A7.35 7.35 0 1 0 697.24 83.64Z" fill="#b5c41b"/><line x1="702.99" y1="76.20" x2="710.72" y2="83.16" stroke="#484848" stroke-width="0.65"/><circle cx="713.08" cy="87.20" r="1.27" fill="none" stroke="#d6d9e0" stroke-width="0.90"/><circle cx="713.08" cy="87.20" r="1.80" fill="none" stroke="#d6d9e0" stroke-width="0.45" stroke-dasharray="0.60 0.81"/><path d="M717.06 85.33h2.55v0.60h-0.38v1.65l0.68 0.68v0.38h-1.27v1.27h-0.60v-1.27h-1.27v-0.38l0.68 -0.68v-1.65h-0.38z" fill="#d6d9e0"/><path d="M217.35 123.00A11.1 11.1 0 1 1 233.05 123.00L229.99 119.94A7.35 7.35 0 1 0 218.56 121.79Z" fill="#b5c41b"/><path d="M217.35 123.00A11.1 11.1 0 0 1 215.69 120.87L217.14 119.99A7.35 7.35 0 0 0 218.56 121.79Z" fill="#e30613"/><path d="M215.69 120.87A11.1 11.1 0 0 1 215.14 119.84L216.72 119.11A7.35 7.35 0 0 0 217.14 119.99Z" fill="#f5c400"/><line x1="224.31" y1="114.35" x2="232.04" y2="121.31" stroke="#484848" stroke-width="0.65"/><circle cx="234.40" cy="125.35" r="1.27" fill="none" stroke="#d6d9e0" stroke-width="0.90"/><circle cx="234.40" cy="125.35" r="1.80" fill="none" stroke="#d6d9e0" stroke-width="0.45" stroke-dasharray="0.60 0.81"/><path d="M238.38 123.47h2.55v0.60h-0.38v1.65l0.68 0.68v0.38h-1.27v1.27h-0.60v-1.27h-1.27v-0.38l0.68 -0.68v-1.65h-0.38z" fill="#d6d9e0"/><path d="M297.13 123.00A11.1 11.1 0 1 1 312.83 123.00L309.77 119.94A7.35 7.35 0 1 0 298.34 121.79Z" fill="#b5c41b"/><line x1="304.09" y1="114.35" x2="311.82" y2="121.31" stroke="#484848" stroke-width="0.65"/><circle cx="314.18" cy="125.35" r="1.27" fill="none" stroke="#d6d9e0" stroke-width="0.90"/><circle cx="314.18" cy="125.35" r="1.80" fill="none" stroke="#d6d9e0" stroke-width="0.45" stroke-dasharray="0.60 0.81"/><path d="M318.16 123.47h2.55v0.60h-0.38v1.65l0.68 0.68v0.38h-1.27v1.27h-0.60v-1.27h-1.27v-0.38l0.68 -0.68v-1.65h-0.38z" fill="#d6d9e0"/><path d="M39.4 205.3h4l-2 2.4z" fill="#222a4a"/><path d="M189.10 204.15L190.60 201.70L192.10 204.15Z" fill="#d2d2d2"/><path d="M189.10 205.05L190.60 207.50L192.10 205.05Z" fill="#d2d2d2"/><path d="M292.80 204.15L294.30 201.70L295.80 204.15Z" fill="#d2d2d2"/><path d="M292.80 205.05L294.30 207.50L295.80 205.05Z" fill="#d2d2d2"/><path d="M396.50 212.35L398.00 209.90L399.50 212.35Z" fill="#d2d2d2"/><path d="M396.50 213.25L398.00 215.70L399.50 213.25Z" fill="#d2d2d2"/><path d="M551.30 204.15L552.80 201.70L554.30 204.15Z" fill="#d2d2d2"/><path d="M551.30 205.05L552.80 207.50L554.30 205.05Z" fill="#d2d2d2"/><path d="M706.30 204.15L707.80 201.70L709.30 204.15Z" fill="#d2d2d2"/><path d="M706.30 205.05L707.80 207.50L709.30 205.05Z" fill="#d2d2d2"/><circle cx="749.90" cy="228.52" r="1.65" fill="none" stroke="#5a5a5a" stroke-width="1.15"/><circle cx="747.40" cy="230.82" r="1.25" fill="#6a6a6a"/><circle cx="749.90" cy="245.96" r="1.65" fill="none" stroke="#5a5a5a" stroke-width="1.15"/><circle cx="747.40" cy="248.26" r="1.25" fill="#6a6a6a"/><circle cx="749.90" cy="263.40" r="1.65" fill="none" stroke="#5a5a5a" stroke-width="1.15"/><circle cx="747.40" cy="265.70" r="1.25" fill="#6a6a6a"/><circle cx="749.90" cy="280.84" r="1.65" fill="none" stroke="#5a5a5a" stroke-width="1.15"/><circle cx="747.40" cy="283.14" r="1.25" fill="#6a6a6a"/><circle cx="749.90" cy="298.28" r="1.65" fill="none" stroke="#5a5a5a" stroke-width="1.15"/><circle cx="747.40" cy="300.58" r="1.25" fill="#6a6a6a"/><circle cx="749.90" cy="315.72" r="1.65" fill="none" stroke="#5a5a5a" stroke-width="1.15"/><circle cx="747.40" cy="318.02" r="1.25" fill="#6a6a6a"/><circle cx="749.90" cy="333.16" r="1.65" fill="none" stroke="#5a5a5a" stroke-width="1.15"/><circle cx="747.40" cy="335.46" r="1.25" fill="#6a6a6a"/><circle cx="749.90" cy="350.60" r="1.65" fill="none" stroke="#5a5a5a" stroke-width="1.15"/><circle cx="747.40" cy="352.90" r="1.25" fill="#6a6a6a"/><circle cx="749.90" cy="368.04" r="1.65" fill="none" stroke="#5a5a5a" stroke-width="1.15"/><circle cx="747.40" cy="370.34" r="1.25" fill="#6a6a6a"/><circle cx="749.90" cy="385.48" r="1.65" fill="none" stroke="#5a5a5a" stroke-width="1.15"/><circle cx="747.40" cy="387.78" r="1.25" fill="#6a6a6a"/><circle cx="749.90" cy="402.92" r="1.65" fill="none" stroke="#5a5a5a" stroke-width="1.15"/><circle cx="747.40" cy="405.22" r="1.25" fill="#6a6a6a"/><rect x="1009.70" y="62.00" width="3.8" height="8.8" fill="#a6abb6"/><rect x="1009.70" y="62.00" width="3.8" height="1.0" fill="#8e929c"/><rect x="1011.70" y="63.40" width="0.9" height="0.8" fill="#e8e8ec"/><rect x="1012.30" y="64.40" width="0.9" height="0.8" fill="#8e929c"/><rect x="1010.10" y="65.40" width="0.9" height="0.8" fill="#8e929c"/><rect x="1011.70" y="66.40" width="0.9" height="0.8" fill="#8e929c"/><rect x="1010.90" y="67.40" width="0.9" height="0.8" fill="#8e929c"/><rect x="1010.10" y="68.40" width="0.9" height="0.8" fill="#f2f2f4"/><rect x="1012.30" y="69.40" width="0.9" height="0.8" fill="#8e929c"/><rect x="1014.30" y="62.00" width="3.8" height="8.8" fill="#a6abb6"/><rect x="1014.30" y="62.00" width="3.8" height="1.0" fill="#8e929c"/><rect x="1015.50" y="63.40" width="0.9" height="0.8" fill="#8e929c"/><rect x="1016.90" y="64.40" width="0.9" height="0.8" fill="#8e929c"/><rect x="1014.70" y="65.40" width="0.9" height="0.8" fill="#e8e8ec"/><rect x="1014.70" y="66.40" width="0.9" height="0.8" fill="#f2f2f4"/><rect x="1014.70" y="67.40" width="0.9" height="0.8" fill="#e8e8ec"/><rect x="1014.70" y="68.40" width="0.9" height="0.8" fill="#e8e8ec"/><rect x="1016.30" y="69.40" width="0.9" height="0.8" fill="#f2f2f4"/><rect x="848.40" y="225.20" width="75.90" height="85.90" fill="#fff"/><path d="M857.80 225.20V311.10" stroke="#e3e3e6" stroke-width="0.6"/><path d="M873.00 225.20V311.10" stroke="#e3e3e6" stroke-width="0.6"/><path d="M888.40 225.20V311.10" stroke="#e3e3e6" stroke-width="0.6"/><path d="M903.60 225.20V311.10" stroke="#e3e3e6" stroke-width="0.6"/><path d="M918.80 225.20V311.10" stroke="#e3e3e6" stroke-width="0.6"/><path d="M848.40 228.20H924.30" stroke="#e3e3e6" stroke-width="0.6"/><path d="M848.40 239.80H924.30" stroke="#e3e3e6" stroke-width="0.6"/><path d="M848.40 251.40H924.30" stroke="#e3e3e6" stroke-width="0.6"/><path d="M848.40 263.00H924.30" stroke="#e3e3e6" stroke-width="0.6"/><path d="M848.40 274.60H924.30" stroke="#e3e3e6" stroke-width="0.6"/><path d="M848.40 286.20H924.30" stroke="#e3e3e6" stroke-width="0.6"/><path d="M848.40 297.80H924.30" stroke="#e3e3e6" stroke-width="0.6"/><path d="M848.40 309.40H924.30" stroke="#e3e3e6" stroke-width="0.6"/><path d="M848.40 225.20V311.10H924.30V225.20" stroke="#6e6e6e" stroke-width="0.8" fill="none"/><path d="M848.40 225.20H924.30" stroke="#d0d0d0" stroke-width="0.5" fill="none"/><text x="844.40" y="230.15" font-size="4.6" fill="#5c5350" stroke="#5c5350" stroke-width="0.12" text-anchor="end" transform="rotate(0.03 844.40 230.15)">70.000</text><path d="M846.60 228.20h1.8" stroke="#6a6a6a" stroke-width="0.6"/><text x="844.40" y="241.75" font-size="4.6" fill="#5c5350" stroke="#5c5350" stroke-width="0.12" text-anchor="end" transform="rotate(0.03 844.40 241.75)">60.000</text><path d="M846.60 239.80h1.8" stroke="#6a6a6a" stroke-width="0.6"/><text x="844.40" y="253.35" font-size="4.6" fill="#5c5350" stroke="#5c5350" stroke-width="0.12" text-anchor="end" transform="rotate(0.03 844.40 253.35)">50.000</text><path d="M846.60 251.40h1.8" stroke="#6a6a6a" stroke-width="0.6"/><text x="844.40" y="264.95" font-size="4.6" fill="#5c5350" stroke="#5c5350" stroke-width="0.12" text-anchor="end" transform="rotate(0.03 844.40 264.95)">40.000</text><path d="M846.60 263.00h1.8" stroke="#6a6a6a" stroke-width="0.6"/><text x="844.40" y="276.55" font-size="4.6" fill="#5c5350" stroke="#5c5350" stroke-width="0.12" text-anchor="end" transform="rotate(0.03 844.40 276.55)">30.000</text><path d="M846.60 274.60h1.8" stroke="#6a6a6a" stroke-width="0.6"/><text x="844.40" y="288.15" font-size="4.6" fill="#5c5350" stroke="#5c5350" stroke-width="0.12" text-anchor="end" transform="rotate(0.03 844.40 288.15)">20.000</text><path d="M846.60 286.20h1.8" stroke="#6a6a6a" stroke-width="0.6"/><text x="844.40" y="299.75" font-size="4.6" fill="#5c5350" stroke="#5c5350" stroke-width="0.12" text-anchor="end" transform="rotate(0.03 844.40 299.75)">10.000</text><path d="M846.60 297.80h1.8" stroke="#6a6a6a" stroke-width="0.6"/><text x="844.40" y="311.35" font-size="4.6" fill="#5c5350" stroke="#5c5350" stroke-width="0.12" text-anchor="end" transform="rotate(0.03 844.40 311.35)">0</text><path d="M846.60 309.40h1.8" stroke="#6a6a6a" stroke-width="0.6"/><text x="859.40" y="313.40" font-size="4.6" fill="#5c5350" stroke="#5c5350" stroke-width="0.12" text-anchor="end" transform="rotate(-89.97 859.40 313.40)">06:00</text><text x="874.60" y="313.40" font-size="4.6" fill="#5c5350" stroke="#5c5350" stroke-width="0.12" text-anchor="end" transform="rotate(-89.97 874.60 313.40)">08:00</text><text x="890.00" y="313.40" font-size="4.6" fill="#5c5350" stroke="#5c5350" stroke-width="0.12" text-anchor="end" transform="rotate(-89.97 890.00 313.40)">10:00</text><text x="905.20" y="313.40" font-size="4.6" fill="#5c5350" stroke="#5c5350" stroke-width="0.12" text-anchor="end" transform="rotate(-89.97 905.20 313.40)">12:00</text><text x="920.40" y="313.40" font-size="4.6" fill="#5c5350" stroke="#5c5350" stroke-width="0.12" text-anchor="end" transform="rotate(-89.97 920.40 313.40)">14:00</text><text x="928.40" y="229.30" font-size="4.4" fill="#5c5350" stroke="#5c5350" stroke-width="0.12" transform="rotate(0.03 928.40 229.30)">110</text><path d="M924.30 227.70h1.8" stroke="#6a6a6a" stroke-width="0.6"/><text x="928.40" y="236.72" font-size="4.4" fill="#5c5350" stroke="#5c5350" stroke-width="0.12" transform="rotate(0.03 928.40 236.72)">100</text><path d="M924.30 235.12h1.8" stroke="#6a6a6a" stroke-width="0.6"/><text x="928.40" y="244.14" font-size="4.4" fill="#5c5350" stroke="#5c5350" stroke-width="0.12" transform="rotate(0.03 928.40 244.14)">90</text><path d="M924.30 242.54h1.8" stroke="#6a6a6a" stroke-width="0.6"/><text x="928.40" y="251.55" font-size="4.4" fill="#5c5350" stroke="#5c5350" stroke-width="0.12" transform="rotate(0.03 928.40 251.55)">80</text><path d="M924.30 249.95h1.8" stroke="#6a6a6a" stroke-width="0.6"/><text x="928.40" y="258.97" font-size="4.4" fill="#5c5350" stroke="#5c5350" stroke-width="0.12" transform="rotate(0.03 928.40 258.97)">70</text><path d="M924.30 257.37h1.8" stroke="#6a6a6a" stroke-width="0.6"/><text x="928.40" y="266.39" font-size="4.4" fill="#5c5350" stroke="#5c5350" stroke-width="0.12" transform="rotate(0.03 928.40 266.39)">60</text><path d="M924.30 264.79h1.8" stroke="#6a6a6a" stroke-width="0.6"/><text x="928.40" y="273.81" font-size="4.4" fill="#5c5350" stroke="#5c5350" stroke-width="0.12" transform="rotate(0.03 928.40 273.81)">50</text><path d="M924.30 272.21h1.8" stroke="#6a6a6a" stroke-width="0.6"/><text x="928.40" y="281.23" font-size="4.4" fill="#5c5350" stroke="#5c5350" stroke-width="0.12" transform="rotate(0.03 928.40 281.23)">40</text><path d="M924.30 279.63h1.8" stroke="#6a6a6a" stroke-width="0.6"/><text x="928.40" y="288.65" font-size="4.4" fill="#5c5350" stroke="#5c5350" stroke-width="0.12" transform="rotate(0.03 928.40 288.65)">30</text><path d="M924.30 287.05h1.8" stroke="#6a6a6a" stroke-width="0.6"/><text x="928.40" y="296.06" font-size="4.4" fill="#5c5350" stroke="#5c5350" stroke-width="0.12" transform="rotate(0.03 928.40 296.06)">20</text><path d="M924.30 294.46h1.8" stroke="#6a6a6a" stroke-width="0.6"/><text x="928.40" y="303.48" font-size="4.4" fill="#5c5350" stroke="#5c5350" stroke-width="0.12" transform="rotate(0.03 928.40 303.48)">10</text><path d="M924.30 301.88h1.8" stroke="#6a6a6a" stroke-width="0.6"/><text x="928.40" y="310.90" font-size="4.4" fill="#5c5350" stroke="#5c5350" stroke-width="0.12" transform="rotate(0.03 928.40 310.90)">0</text><path d="M924.30 309.30h1.8" stroke="#6a6a6a" stroke-width="0.6"/><text x="943.20" y="268.30" font-size="4.2" fill="#5c5350" stroke="#5c5350" stroke-width="0.12" text-anchor="middle" transform="rotate(-89.97 943.20 268.30)">%</text><path d="M949.60 225.20V311.00" stroke="#e0b877" stroke-width="0.9" fill="none"/><path d="M949.60 227.70h2.2" stroke="#e0b877" stroke-width="0.6"/><text x="953.80" y="229.66" font-size="4.6" fill="#5c5350" stroke="#5c5350" stroke-width="0.12" transform="rotate(0.03 953.80 229.66)">15.842</text><path d="M949.60 235.12h2.2" stroke="#e0b877" stroke-width="0.6"/><text x="953.80" y="237.07" font-size="4.6" fill="#5c5350" stroke="#5c5350" stroke-width="0.12" transform="rotate(0.03 953.80 237.07)">15.840</text><path d="M949.60 242.54h2.2" stroke="#e0b877" stroke-width="0.6"/><text x="953.80" y="244.49" font-size="4.6" fill="#5c5350" stroke="#5c5350" stroke-width="0.12" transform="rotate(0.03 953.80 244.49)">15.838</text><path d="M949.60 249.95h2.2" stroke="#e0b877" stroke-width="0.6"/><text x="953.80" y="251.91" font-size="4.6" fill="#5c5350" stroke="#5c5350" stroke-width="0.12" transform="rotate(0.03 953.80 251.91)">15.836</text><path d="M949.60 257.37h2.2" stroke="#e0b877" stroke-width="0.6"/><text x="953.80" y="259.33" font-size="4.6" fill="#5c5350" stroke="#5c5350" stroke-width="0.12" transform="rotate(0.03 953.80 259.33)">15.834</text><path d="M949.60 264.79h2.2" stroke="#e0b877" stroke-width="0.6"/><text x="953.80" y="266.75" font-size="4.6" fill="#5c5350" stroke="#5c5350" stroke-width="0.12" transform="rotate(0.03 953.80 266.75)">15.832</text><path d="M949.60 272.21h2.2" stroke="#e0b877" stroke-width="0.6"/><text x="953.80" y="274.17" font-size="4.6" fill="#5c5350" stroke="#5c5350" stroke-width="0.12" transform="rotate(0.03 953.80 274.17)">15.830</text><path d="M949.60 279.63h2.2" stroke="#e0b877" stroke-width="0.6"/><text x="953.80" y="281.58" font-size="4.6" fill="#5c5350" stroke="#5c5350" stroke-width="0.12" transform="rotate(0.03 953.80 281.58)">15.828</text><path d="M949.60 287.05h2.2" stroke="#e0b877" stroke-width="0.6"/><text x="953.80" y="289.00" font-size="4.6" fill="#5c5350" stroke="#5c5350" stroke-width="0.12" transform="rotate(0.03 953.80 289.00)">15.826</text><path d="M949.60 294.46h2.2" stroke="#e0b877" stroke-width="0.6"/><text x="953.80" y="296.42" font-size="4.6" fill="#5c5350" stroke="#5c5350" stroke-width="0.12" transform="rotate(0.03 953.80 296.42)">15.824</text><path d="M949.60 301.88h2.2" stroke="#e0b877" stroke-width="0.6"/><text x="953.80" y="303.84" font-size="4.6" fill="#5c5350" stroke="#5c5350" stroke-width="0.12" transform="rotate(0.03 953.80 303.84)">15.822</text><path d="M949.60 309.30h2.2" stroke="#e0b877" stroke-width="0.6"/><text x="953.80" y="311.26" font-size="4.6" fill="#5c5350" stroke="#5c5350" stroke-width="0.12" transform="rotate(0.03 953.80 311.26)">15.820</text><text x="975.00" y="268.10" font-size="4.369999999999999" fill="#5c5350" stroke="#5c5350" stroke-width="0.12" text-anchor="middle" transform="rotate(-89.97 975.00 268.10)">MB</text><path d="M979.00 225.20V311.00" stroke="#9a9a9a" stroke-width="0.9" fill="none"/><path d="M979.00 237.10h2.2" stroke="#9a9a9a" stroke-width="0.6"/><text x="983.20" y="239.06" font-size="4.6" fill="#5c5350" stroke="#5c5350" stroke-width="0.12" transform="rotate(0.03 983.20 239.06)">4.000</text><path d="M979.00 250.80h2.2" stroke="#9a9a9a" stroke-width="0.6"/><text x="983.20" y="252.76" font-size="4.6" fill="#5c5350" stroke="#5c5350" stroke-width="0.12" transform="rotate(0.03 983.20 252.76)">3.500</text><path d="M979.00 264.50h2.2" stroke="#9a9a9a" stroke-width="0.6"/><text x="983.20" y="266.46" font-size="4.6" fill="#5c5350" stroke="#5c5350" stroke-width="0.12" transform="rotate(0.03 983.20 266.46)">3.000</text><path d="M979.00 278.20h2.2" stroke="#9a9a9a" stroke-width="0.6"/><text x="983.20" y="280.16" font-size="4.6" fill="#5c5350" stroke="#5c5350" stroke-width="0.12" transform="rotate(0.03 983.20 280.16)">2.500</text><path d="M979.00 291.90h2.2" stroke="#9a9a9a" stroke-width="0.6"/><text x="983.20" y="293.86" font-size="4.6" fill="#5c5350" stroke="#5c5350" stroke-width="0.12" transform="rotate(0.03 983.20 293.86)">2.000</text><path d="M979.00 305.60h2.2" stroke="#9a9a9a" stroke-width="0.6"/><text x="983.20" y="307.56" font-size="4.6" fill="#5c5350" stroke="#5c5350" stroke-width="0.12" transform="rotate(0.03 983.20 307.56)">1.500</text><text x="1001.30" y="268.10" font-size="4.369999999999999" fill="#5c5350" stroke="#5c5350" stroke-width="0.12" text-anchor="middle" transform="rotate(-89.97 1001.30 268.10)">kbit/Sek.</text><path d="M1003.80 225.20V311.00" stroke="#9a9a9a" stroke-width="0.9" fill="none"/><path d="M1003.80 231.90h2.2" stroke="#9a9a9a" stroke-width="0.6"/><text x="1008.60" y="233.86" font-size="4.6" fill="#5c5350" stroke="#5c5350" stroke-width="0.12" transform="rotate(0.03 1008.60 233.86)">780</text><path d="M1003.80 241.58h2.2" stroke="#9a9a9a" stroke-width="0.6"/><text x="1008.60" y="243.53" font-size="4.6" fill="#5c5350" stroke="#5c5350" stroke-width="0.12" transform="rotate(0.03 1008.60 243.53)">760</text><path d="M1003.80 251.25h2.2" stroke="#9a9a9a" stroke-width="0.6"/><text x="1008.60" y="253.21" font-size="4.6" fill="#5c5350" stroke="#5c5350" stroke-width="0.12" transform="rotate(0.03 1008.60 253.21)">740</text><path d="M1003.80 260.93h2.2" stroke="#9a9a9a" stroke-width="0.6"/><text x="1008.60" y="262.88" font-size="4.6" fill="#5c5350" stroke="#5c5350" stroke-width="0.12" transform="rotate(0.03 1008.60 262.88)">720</text><path d="M1003.80 270.60h2.2" stroke="#9a9a9a" stroke-width="0.6"/><text x="1008.60" y="272.56" font-size="4.6" fill="#5c5350" stroke="#5c5350" stroke-width="0.12" transform="rotate(0.03 1008.60 272.56)">700</text><path d="M1003.80 280.27h2.2" stroke="#9a9a9a" stroke-width="0.6"/><text x="1008.60" y="282.23" font-size="4.6" fill="#5c5350" stroke="#5c5350" stroke-width="0.12" transform="rotate(0.03 1008.60 282.23)">680</text><path d="M1003.80 289.95h2.2" stroke="#9a9a9a" stroke-width="0.6"/><text x="1008.60" y="291.91" font-size="4.6" fill="#5c5350" stroke="#5c5350" stroke-width="0.12" transform="rotate(0.03 1008.60 291.91)">660</text><path d="M1003.80 299.62h2.2" stroke="#9a9a9a" stroke-width="0.6"/><text x="1008.60" y="301.58" font-size="4.6" fill="#5c5350" stroke="#5c5350" stroke-width="0.12" transform="rotate(0.03 1008.60 301.58)">640</text><path d="M1003.80 309.30h2.2" stroke="#9a9a9a" stroke-width="0.6"/><text x="1008.60" y="311.26" font-size="4.6" fill="#5c5350" stroke="#5c5350" stroke-width="0.12" transform="rotate(0.03 1008.60 311.26)">620</text><text x="1022.40" y="268.10" font-size="4.369999999999999" fill="#5c5350" stroke="#5c5350" stroke-width="0.12" text-anchor="middle" transform="rotate(-89.97 1022.40 268.10)">#/Sek.</text><polyline points="922.9,230.0 922.9,309.0" fill="none" stroke="#bba6d2" stroke-width="1.5" stroke-linejoin="round"/><polyline points="922.4,276.0 922.4,303.0" fill="none" stroke="#dba678" stroke-width="1.1" stroke-linejoin="round"/><polyline points="914.8,227.3 923.8,227.3" fill="none" stroke="#e30613" stroke-width="1.1" stroke-linejoin="round"/><polyline points="914.3,232.4 917.5,234.8 921.3,237.4 921.3,300.0" fill="none" stroke="#e8a94a" stroke-width="0.7" stroke-linejoin="round"/><polyline points="914.3,235.4 923.0,235.4" fill="none" stroke="#2f9a78" stroke-width="0.7" stroke-linejoin="round"/><polyline points="914.8,236.0 916.0,246.0 916.8,251.0 917.6,247.5 918.4,256.0 919.2,260.5 919.8,249.0 920.4,242.0 921.0,262.0 921.6,248.0" fill="none" stroke="#3d8c7c" stroke-width="0.7" stroke-linejoin="round"/><polyline points="914.5,263.0 915.6,268.0 916.6,276.0 917.4,279.0 918.2,271.0 919.0,280.0 919.8,285.0 920.8,288.4 921.4,272.0 922.0,262.0" fill="none" stroke="#232c54" stroke-width="0.8" stroke-linejoin="round"/><polyline points="914.3,294.4 916.0,294.8 917.8,295.4 919.8,296.4 921.3,296.0 921.3,290.0" fill="none" stroke="#a97cc4" stroke-width="0.5" stroke-linejoin="round"/><polyline points="914.3,302.3 917.0,302.8 919.8,303.4 921.0,304.6 922.3,302.0" fill="none" stroke="#e08a9a" stroke-width="0.5" stroke-linejoin="round"/><polyline points="914.3,309.3 923.8,309.3" fill="none" stroke="#ee4fa8" stroke-width="1.2" stroke-linejoin="round"/><circle cx="914.5" cy="263" r="1.2" fill="#1a2250"/><circle cx="920.6" cy="288" r="0.9" fill="#232c54"/><circle cx="914.6" cy="309.3" r="1.2" fill="#ee4fa8"/><circle cx="923.4" cy="309.3" r="1.0" fill="#ee4fa8"/><rect x="913.2" y="234.6" width="2.3" height="2.3" fill="#2f9a78"/><rect x="922" y="234.3" width="2.2" height="2.2" fill="#2f9a78"/><circle cx="914.4" cy="232.3" r="1.3" fill="#e8a33d"/><text x="909.40" y="306.30" font-size="3.3" fill="#8a8a5a" stroke="#8a8a5a" stroke-width="0.12" transform="rotate(0.03 909.40 306.30)" textLength="14.20" lengthAdjust="spacingAndGlyphs">Max: 0 %</text><text x="852.40" y="236.40" font-size="10.4" fill="#555" transform="rotate(0.03 852.40 236.40)" textLength="97.00" lengthAdjust="spacingAndGlyphs">Livegraph, 10 Stunden</text><rect x="837.70" y="334.20" width="75.60" height="47.20" fill="#fff"/><path d="M852.70 334.20V381.40" stroke="#e3e3e6" stroke-width="0.6"/><path d="M871.70 334.20V381.40" stroke="#e3e3e6" stroke-width="0.6"/><path d="M890.70 334.20V381.40" stroke="#e3e3e6" stroke-width="0.6"/><path d="M909.70 334.20V381.40" stroke="#e3e3e6" stroke-width="0.6"/><path d="M837.70 336.40H913.30" stroke="#e3e3e6" stroke-width="0.6"/><path d="M837.70 345.08H913.30" stroke="#e3e3e6" stroke-width="0.6"/><path d="M837.70 353.76H913.30" stroke="#e3e3e6" stroke-width="0.6"/><path d="M837.70 362.44H913.30" stroke="#e3e3e6" stroke-width="0.6"/><path d="M837.70 371.12H913.30" stroke="#e3e3e6" stroke-width="0.6"/><path d="M837.70 379.80H913.30" stroke="#e3e3e6" stroke-width="0.6"/><path d="M837.70 334.20V381.40H913.30V334.20" stroke="#6e6e6e" stroke-width="0.8" fill="none"/><path d="M837.70 334.20H913.30" stroke="#d0d0d0" stroke-width="0.5" fill="none"/><text x="834.30" y="338.00" font-size="4.6" fill="#5c5350" stroke="#5c5350" stroke-width="0.12" text-anchor="end" transform="rotate(0.03 834.30 338.00)">100</text><path d="M835.90 336.40h1.8" stroke="#6a6a6a" stroke-width="0.6"/><text x="834.30" y="346.68" font-size="4.6" fill="#5c5350" stroke="#5c5350" stroke-width="0.12" text-anchor="end" transform="rotate(0.03 834.30 346.68)">80</text><path d="M835.90 345.08h1.8" stroke="#6a6a6a" stroke-width="0.6"/><text x="834.30" y="355.36" font-size="4.6" fill="#5c5350" stroke="#5c5350" stroke-width="0.12" text-anchor="end" transform="rotate(0.03 834.30 355.36)">60</text><path d="M835.90 353.76h1.8" stroke="#6a6a6a" stroke-width="0.6"/><text x="834.30" y="364.04" font-size="4.6" fill="#5c5350" stroke="#5c5350" stroke-width="0.12" text-anchor="end" transform="rotate(0.03 834.30 364.04)">40</text><path d="M835.90 362.44h1.8" stroke="#6a6a6a" stroke-width="0.6"/><text x="834.30" y="372.72" font-size="4.6" fill="#5c5350" stroke="#5c5350" stroke-width="0.12" text-anchor="end" transform="rotate(0.03 834.30 372.72)">20</text><path d="M835.90 371.12h1.8" stroke="#6a6a6a" stroke-width="0.6"/><text x="834.30" y="381.40" font-size="4.6" fill="#5c5350" stroke="#5c5350" stroke-width="0.12" text-anchor="end" transform="rotate(0.03 834.30 381.40)">0</text><path d="M835.90 379.80h1.8" stroke="#6a6a6a" stroke-width="0.6"/><text x="822.80" y="357.80" font-size="4.2" fill="#5c5350" stroke="#5c5350" stroke-width="0.12" text-anchor="middle" transform="rotate(-89.97 822.80 357.80)">%</text><text x="917.80" y="344.80" font-size="4.4" fill="#5c5350" stroke="#5c5350" stroke-width="0.12" transform="rotate(0.03 917.80 344.80)">16Std.</text><path d="M913.30 343.20h1.8" stroke="#6a6a6a" stroke-width="0.6"/><text x="917.80" y="357.00" font-size="4.4" fill="#5c5350" stroke="#5c5350" stroke-width="0.12" transform="rotate(0.03 917.80 357.00)">11Std.</text><path d="M913.30 355.40h1.8" stroke="#6a6a6a" stroke-width="0.6"/><text x="917.80" y="369.80" font-size="4.4" fill="#5c5350" stroke="#5c5350" stroke-width="0.12" transform="rotate(0.03 917.80 369.80)">5Std.</text><path d="M913.30 368.20h1.8" stroke="#6a6a6a" stroke-width="0.6"/><text x="917.80" y="381.40" font-size="4.4" fill="#5c5350" stroke="#5c5350" stroke-width="0.12" transform="rotate(0.03 917.80 381.40)">0Std.</text><path d="M913.30 379.80h1.8" stroke="#6a6a6a" stroke-width="0.6"/><text x="850.70" y="384.00" font-size="4.4" fill="#5c5350" stroke="#5c5350" stroke-width="0.12" text-anchor="end" transform="rotate(-89.97 850.70 384.00)">04.05</text><text x="857.50" y="384.00" font-size="4.4" fill="#5c5350" stroke="#5c5350" stroke-width="0.12" text-anchor="end" transform="rotate(-89.97 857.50 384.00)">00:00</text><text x="870.10" y="384.00" font-size="4.4" fill="#5c5350" stroke="#5c5350" stroke-width="0.12" text-anchor="end" transform="rotate(-89.97 870.10 384.00)">04.05</text><text x="876.90" y="384.00" font-size="4.4" fill="#5c5350" stroke="#5c5350" stroke-width="0.12" text-anchor="end" transform="rotate(-89.97 876.90 384.00)">12:00</text><text x="889.40" y="384.00" font-size="4.4" fill="#5c5350" stroke="#5c5350" stroke-width="0.12" text-anchor="end" transform="rotate(-89.97 889.40 384.00)">05.05</text><text x="896.20" y="384.00" font-size="4.4" fill="#5c5350" stroke="#5c5350" stroke-width="0.12" text-anchor="end" transform="rotate(-89.97 896.20 384.00)">00:00</text><text x="908.40" y="384.00" font-size="4.4" fill="#5c5350" stroke="#5c5350" stroke-width="0.12" text-anchor="end" transform="rotate(-89.97 908.40 384.00)">05.05</text><text x="915.20" y="384.00" font-size="4.4" fill="#5c5350" stroke="#5c5350" stroke-width="0.12" text-anchor="end" transform="rotate(-89.97 915.20 384.00)">12:00</text><path d="M949.60 334.20V381.20" stroke="#e0b877" stroke-width="0.9" fill="none"/><path d="M949.60 341.00h2.2" stroke="#e0b877" stroke-width="0.6"/><text x="953.80" y="342.96" font-size="4.6" fill="#5c5350" stroke="#5c5350" stroke-width="0.12" transform="rotate(0.03 953.80 342.96)">15.840</text><path d="M949.60 350.65h2.2" stroke="#e0b877" stroke-width="0.6"/><text x="953.80" y="352.61" font-size="4.6" fill="#5c5350" stroke="#5c5350" stroke-width="0.12" transform="rotate(0.03 953.80 352.61)">15.835</text><path d="M949.60 360.30h2.2" stroke="#e0b877" stroke-width="0.6"/><text x="953.80" y="362.26" font-size="4.6" fill="#5c5350" stroke="#5c5350" stroke-width="0.12" transform="rotate(0.03 953.80 362.26)">15.830</text><path d="M949.60 369.95h2.2" stroke="#e0b877" stroke-width="0.6"/><text x="953.80" y="371.91" font-size="4.6" fill="#5c5350" stroke="#5c5350" stroke-width="0.12" transform="rotate(0.03 953.80 371.91)">15.825</text><path d="M949.60 379.60h2.2" stroke="#e0b877" stroke-width="0.6"/><text x="953.80" y="381.56" font-size="4.6" fill="#5c5350" stroke="#5c5350" stroke-width="0.12" transform="rotate(0.03 953.80 381.56)">15.820</text><text x="975.00" y="357.70" font-size="4.369999999999999" fill="#5c5350" stroke="#5c5350" stroke-width="0.12" text-anchor="middle" transform="rotate(-89.97 975.00 357.70)">MB</text><path d="M978.30 334.20V381.20" stroke="#9a9a9a" stroke-width="0.9" fill="none"/><path d="M978.30 341.00h2.2" stroke="#9a9a9a" stroke-width="0.6"/><text x="982.40" y="342.96" font-size="4.6" fill="#5c5350" stroke="#5c5350" stroke-width="0.12" transform="rotate(0.03 982.40 342.96)">4.000</text><path d="M978.30 348.66h2.2" stroke="#9a9a9a" stroke-width="0.6"/><text x="982.40" y="350.62" font-size="4.6" fill="#5c5350" stroke="#5c5350" stroke-width="0.12" transform="rotate(0.03 982.40 350.62)">3.500</text><path d="M978.30 356.32h2.2" stroke="#9a9a9a" stroke-width="0.6"/><text x="982.40" y="358.28" font-size="4.6" fill="#5c5350" stroke="#5c5350" stroke-width="0.12" transform="rotate(0.03 982.40 358.28)">3.000</text><path d="M978.30 363.98h2.2" stroke="#9a9a9a" stroke-width="0.6"/><text x="982.40" y="365.94" font-size="4.6" fill="#5c5350" stroke="#5c5350" stroke-width="0.12" transform="rotate(0.03 982.40 365.94)">2.500</text><path d="M978.30 371.64h2.2" stroke="#9a9a9a" stroke-width="0.6"/><text x="982.40" y="373.60" font-size="4.6" fill="#5c5350" stroke="#5c5350" stroke-width="0.12" transform="rotate(0.03 982.40 373.60)">2.000</text><path d="M978.30 379.30h2.2" stroke="#9a9a9a" stroke-width="0.6"/><text x="982.40" y="381.26" font-size="4.6" fill="#5c5350" stroke="#5c5350" stroke-width="0.12" transform="rotate(0.03 982.40 381.26)">1.500</text><text x="1001.30" y="357.70" font-size="4.369999999999999" fill="#5c5350" stroke="#5c5350" stroke-width="0.12" text-anchor="middle" transform="rotate(-89.97 1001.30 357.70)">kbit/Sek.</text><path d="M1004.20 334.20V381.20" stroke="#9a9a9a" stroke-width="0.9" fill="none"/><path d="M1004.20 348.10h2.2" stroke="#9a9a9a" stroke-width="0.6"/><text x="1008.60" y="350.06" font-size="4.6" fill="#5c5350" stroke="#5c5350" stroke-width="0.12" transform="rotate(0.03 1008.60 350.06)">750</text><path d="M1004.20 362.70h2.2" stroke="#9a9a9a" stroke-width="0.6"/><text x="1008.60" y="364.66" font-size="4.6" fill="#5c5350" stroke="#5c5350" stroke-width="0.12" transform="rotate(0.03 1008.60 364.66)">700</text><path d="M1004.20 377.10h2.2" stroke="#9a9a9a" stroke-width="0.6"/><text x="1008.60" y="379.06" font-size="4.6" fill="#5c5350" stroke="#5c5350" stroke-width="0.12" transform="rotate(0.03 1008.60 379.06)">650</text><text x="1022.60" y="357.70" font-size="4.369999999999999" fill="#5c5350" stroke="#5c5350" stroke-width="0.12" text-anchor="middle" transform="rotate(-89.97 1022.60 357.70)">#/Sek.</text><polyline points="838.2,379.7 913.0,379.7" fill="none" stroke="#f2405c" stroke-width="0.7" stroke-linejoin="round"/><circle cx="838.4" cy="379.7" r="1.1" fill="#e30613"/><polyline points="912.9,338.0 912.9,379.0" fill="none" stroke="#6a5a80" stroke-width="0.8" stroke-linejoin="round"/><polyline points="912.1,346.0 912.1,379.0" fill="none" stroke="#f0a0c0" stroke-width="0.9" stroke-linejoin="round"/><polyline points="911.4,336.0 911.4,344.0" fill="none" stroke="#2f9a8c" stroke-width="1.0" stroke-linejoin="round"/><polyline points="912.3,340.0 912.3,345.0" fill="none" stroke="#e8a33d" stroke-width="0.9" stroke-linejoin="round"/><polyline points="913.0,344.0 912.0,357.0 913.0,370.0" fill="none" stroke="#8a7a5a" stroke-width="0.6" stroke-linejoin="round"/><circle cx="911.9" cy="357.6" r="1.25" fill="#1a2250"/><rect x="911.9" y="334.6" width="2.2" height="2.4" fill="#e30613"/><rect x="910.6" y="335.2" width="1.6" height="2.0" fill="#2f7a50"/><circle cx="912.8" cy="379.6" r="1.3" fill="#ee4fa8"/><text x="895.60" y="376.90" font-size="3.5" fill="#8c8c78" stroke="#8c8c78" stroke-width="0.12" transform="rotate(0.03 895.60 376.90)">Max: 0 %</text><text x="841.60" y="345.40" font-size="10.4" fill="#555" transform="rotate(0.03 841.60 345.40)" textLength="28.60" lengthAdjust="spacingAndGlyphs">2 Tage</text><rect x="837.70" y="404.90" width="68.80" height="35.00" fill="#fff"/><path d="M845.30 404.90V439.90" stroke="#e3e3e6" stroke-width="0.6"/><path d="M854.50 404.90V439.90" stroke="#e3e3e6" stroke-width="0.6"/><path d="M863.80 404.90V439.90" stroke="#e3e3e6" stroke-width="0.6"/><path d="M873.00 404.90V439.90" stroke="#e3e3e6" stroke-width="0.6"/><path d="M882.30 404.90V439.90" stroke="#e3e3e6" stroke-width="0.6"/><path d="M891.50 404.90V439.90" stroke="#e3e3e6" stroke-width="0.6"/><path d="M900.70 404.90V439.90" stroke="#e3e3e6" stroke-width="0.6"/><path d="M837.70 407.00H906.50" stroke="#e3e3e6" stroke-width="0.6"/><path d="M837.70 413.24H906.50" stroke="#e3e3e6" stroke-width="0.6"/><path d="M837.70 419.48H906.50" stroke="#e3e3e6" stroke-width="0.6"/><path d="M837.70 425.72H906.50" stroke="#e3e3e6" stroke-width="0.6"/><path d="M837.70 431.96H906.50" stroke="#e3e3e6" stroke-width="0.6"/><path d="M837.70 438.20H906.50" stroke="#e3e3e6" stroke-width="0.6"/><path d="M837.70 404.90V439.90H906.50V404.90" stroke="#6e6e6e" stroke-width="0.8" fill="none"/><path d="M837.70 404.90H906.50" stroke="#d0d0d0" stroke-width="0.5" fill="none"/><text x="834.30" y="408.60" font-size="4.6" fill="#5c5350" stroke="#5c5350" stroke-width="0.12" text-anchor="end" transform="rotate(0.03 834.30 408.60)">100</text><path d="M835.90 407.00h1.8" stroke="#6a6a6a" stroke-width="0.6"/><text x="834.30" y="414.84" font-size="4.6" fill="#5c5350" stroke="#5c5350" stroke-width="0.12" text-anchor="end" transform="rotate(0.03 834.30 414.84)">80</text><path d="M835.90 413.24h1.8" stroke="#6a6a6a" stroke-width="0.6"/><text x="834.30" y="421.08" font-size="4.6" fill="#5c5350" stroke="#5c5350" stroke-width="0.12" text-anchor="end" transform="rotate(0.03 834.30 421.08)">60</text><path d="M835.90 419.48h1.8" stroke="#6a6a6a" stroke-width="0.6"/><text x="834.30" y="427.32" font-size="4.6" fill="#5c5350" stroke="#5c5350" stroke-width="0.12" text-anchor="end" transform="rotate(0.03 834.30 427.32)">40</text><path d="M835.90 425.72h1.8" stroke="#6a6a6a" stroke-width="0.6"/><text x="834.30" y="433.56" font-size="4.6" fill="#5c5350" stroke="#5c5350" stroke-width="0.12" text-anchor="end" transform="rotate(0.03 834.30 433.56)">20</text><path d="M835.90 431.96h1.8" stroke="#6a6a6a" stroke-width="0.6"/><text x="834.30" y="439.80" font-size="4.6" fill="#5c5350" stroke="#5c5350" stroke-width="0.12" text-anchor="end" transform="rotate(0.03 834.30 439.80)">0</text><path d="M835.90 438.20h1.8" stroke="#6a6a6a" stroke-width="0.6"/><text x="822.80" y="422.50" font-size="4.2" fill="#5c5350" stroke="#5c5350" stroke-width="0.12" text-anchor="middle" transform="rotate(-89.97 822.80 422.50)">%</text><text x="910.50" y="411.80" font-size="4.4" fill="#5c5350" stroke="#5c5350" stroke-width="0.12" transform="rotate(0.03 910.50 411.80)">16Std.</text><path d="M906.50 410.20h1.8" stroke="#6a6a6a" stroke-width="0.6"/><text x="910.50" y="420.80" font-size="4.4" fill="#5c5350" stroke="#5c5350" stroke-width="0.12" transform="rotate(0.03 910.50 420.80)">11Std.</text><path d="M906.50 419.20h1.8" stroke="#6a6a6a" stroke-width="0.6"/><text x="910.50" y="430.60" font-size="4.4" fill="#5c5350" stroke="#5c5350" stroke-width="0.12" transform="rotate(0.03 910.50 430.60)">5Std.</text><path d="M906.50 429.00h1.8" stroke="#6a6a6a" stroke-width="0.6"/><text x="910.50" y="439.80" font-size="4.4" fill="#5c5350" stroke="#5c5350" stroke-width="0.12" transform="rotate(0.03 910.50 439.80)">0Std.</text><path d="M906.50 438.20h1.8" stroke="#6a6a6a" stroke-width="0.6"/><path d="M942.00 405.40V445.00" stroke="#e0b877" stroke-width="0.9" fill="none"/><path d="M942.00 407.00h2.2" stroke="#e0b877" stroke-width="0.6"/><text x="945.60" y="408.96" font-size="4.6" fill="#5c5350" stroke="#5c5350" stroke-width="0.12" transform="rotate(0.03 945.60 408.96)">15.840,00</text><path d="M942.00 413.24h2.2" stroke="#e0b877" stroke-width="0.6"/><text x="945.60" y="415.20" font-size="4.6" fill="#5c5350" stroke="#5c5350" stroke-width="0.12" transform="rotate(0.03 945.60 415.20)">15.839,80</text><path d="M942.00 419.48h2.2" stroke="#e0b877" stroke-width="0.6"/><text x="945.60" y="421.44" font-size="4.6" fill="#5c5350" stroke="#5c5350" stroke-width="0.12" transform="rotate(0.03 945.60 421.44)">15.839,60</text><path d="M942.00 425.72h2.2" stroke="#e0b877" stroke-width="0.6"/><text x="945.60" y="427.68" font-size="4.6" fill="#5c5350" stroke="#5c5350" stroke-width="0.12" transform="rotate(0.03 945.60 427.68)">15.839,40</text><path d="M942.00 431.96h2.2" stroke="#e0b877" stroke-width="0.6"/><text x="945.60" y="433.92" font-size="4.6" fill="#5c5350" stroke="#5c5350" stroke-width="0.12" transform="rotate(0.03 945.60 433.92)">15.839,20</text><path d="M942.00 438.20h2.2" stroke="#e0b877" stroke-width="0.6"/><text x="945.60" y="440.16" font-size="4.6" fill="#5c5350" stroke="#5c5350" stroke-width="0.12" transform="rotate(0.03 945.60 440.16)">15.839,00</text><text x="974.40" y="423.00" font-size="4.2" fill="#5c5350" stroke="#5c5350" stroke-width="0.12" text-anchor="middle" transform="rotate(-89.97 974.40 423.00)">MB</text><path d="M978.30 405.40V445.00" stroke="#9a9a9a" stroke-width="0.9" fill="none"/><path d="M978.30 407.00h2.2" stroke="#9a9a9a" stroke-width="0.6"/><text x="982.40" y="408.96" font-size="4.6" fill="#5c5350" stroke="#5c5350" stroke-width="0.12" transform="rotate(0.03 982.40 408.96)">1.900</text><path d="M978.30 417.10h2.2" stroke="#9a9a9a" stroke-width="0.6"/><text x="982.40" y="419.06" font-size="4.6" fill="#5c5350" stroke="#5c5350" stroke-width="0.12" transform="rotate(0.03 982.40 419.06)">1.800</text><path d="M978.30 427.30h2.2" stroke="#9a9a9a" stroke-width="0.6"/><text x="982.40" y="429.26" font-size="4.6" fill="#5c5350" stroke="#5c5350" stroke-width="0.12" transform="rotate(0.03 982.40 429.26)">1.700</text><path d="M978.30 437.40h2.2" stroke="#9a9a9a" stroke-width="0.6"/><text x="982.40" y="439.36" font-size="4.6" fill="#5c5350" stroke="#5c5350" stroke-width="0.12" transform="rotate(0.03 982.40 439.36)">1.600</text><text x="1001.30" y="424.00" font-size="4.2" fill="#5c5350" stroke="#5c5350" stroke-width="0.12" text-anchor="middle" transform="rotate(-89.97 1001.30 424.00)">kbit/Sek.</text><path d="M1004.20 405.40V445.00" stroke="#9a9a9a" stroke-width="0.9" fill="none"/><path d="M1004.20 413.00h2.2" stroke="#9a9a9a" stroke-width="0.6"/><text x="1008.60" y="414.96" font-size="4.6" fill="#5c5350" stroke="#5c5350" stroke-width="0.12" transform="rotate(0.03 1008.60 414.96)">740</text><path d="M1004.20 423.00h2.2" stroke="#9a9a9a" stroke-width="0.6"/><text x="1008.60" y="424.96" font-size="4.6" fill="#5c5350" stroke="#5c5350" stroke-width="0.12" transform="rotate(0.03 1008.60 424.96)">720</text><path d="M1004.20 432.80h2.2" stroke="#9a9a9a" stroke-width="0.6"/><text x="1008.60" y="434.76" font-size="4.6" fill="#5c5350" stroke="#5c5350" stroke-width="0.12" transform="rotate(0.03 1008.60 434.76)">700</text><text x="1022.60" y="422.00" font-size="4.2" fill="#5c5350" stroke="#5c5350" stroke-width="0.12" text-anchor="middle" transform="rotate(-89.97 1022.60 422.00)">#/Sek.</text><polyline points="838.2,438.2 906.2,438.2" fill="none" stroke="#f2405c" stroke-width="0.7" stroke-linejoin="round"/><circle cx="838.4" cy="438.2" r="1.1" fill="#e30613"/><polyline points="905.9,409.0 905.9,438.0" fill="none" stroke="#c4aecc" stroke-width="0.7" stroke-linejoin="round"/><polyline points="905.5,406.5 905.5,411.0" fill="none" stroke="#4aa89a" stroke-width="0.9" stroke-linejoin="round"/><text x="888.00" y="435.40" font-size="3.5" fill="#8c8c78" stroke="#8c8c78" stroke-width="0.12" transform="rotate(0.03 888.00 435.40)">Max: 0 %</text><text x="841.60" y="416.00" font-size="10.4" fill="#555" transform="rotate(0.03 841.60 416.00)" textLength="34.00" lengthAdjust="spacingAndGlyphs">30 Tage</text><path d="M180.7 1.2v4.8M180.7 1.5h4.6v2.7h-4.6" fill="none" stroke="#fff" stroke-width="0.7"/><path d="M182.6 1.5v1.6h1.4" fill="none" stroke="#fff" stroke-width="0.5"/><rect x="976.9" y="3.4" width="1.4" height="5.4" fill="#fff"/><rect x="979.6" y="3.4" width="1.4" height="5.4" fill="#fff"/><path d="M985.5 2.6h4.2l2 2v5h-6.2z" fill="none" stroke="#fff" stroke-width="0.8"/><path d="M987 6.2h3.4M988.6 4.6v3.2" stroke="#fff" stroke-width="0.9"/><rect x="996.2" y="3.2" width="7.2" height="5.6" fill="none" stroke="#fff" stroke-width="0.8"/><path d="M996.4 3.6l3.4 2.8 3.4-2.8" fill="none" stroke="#fff" stroke-width="0.7"/><path d="M1010.3 5.2a2.5 2.5 0 0 1 4.6-1.0M1015.6 6.6a2.5 2.5 0 0 1-4.6 1.0" fill="none" stroke="#fff" stroke-width="1.45"/><path d="M1016.2 2.6v2.7h-2.7zM1009.7 9.2v-2.7h2.7z" fill="#fff"/><path d="M1018.7 5.0h4.2l-2.1 2.4z" fill="#fff"/><path d="M26.0 44.0a3.1 3.1 0 1 1 5.2 0" fill="none" stroke="#2ba3dc" stroke-width="1.1"/><path d="M28.4 41.8l1.6 1.5" stroke="#2ba3dc" stroke-width="0.8"/><circle cx="115" cy="41.8" r="0.9" fill="#666"/><path d="M113.5 40.2a2.4 2.4 0 0 0 0 3.2M116.5 40.2a2.4 2.4 0 0 1 0 3.2M112.2 39.2a4 4 0 0 0 0 5.2M117.8 39.2a4 4 0 0 1 0 5.2" fill="none" stroke="#666" stroke-width="0.6"/><path d="M416.4 38.4v6.2h8.2" fill="none" stroke="#666" stroke-width="0.7"/><path d="M417.3 44v-2.8l1.5-2 1.500 1.700 1.500-1.300 2.400 2.200v2.200z" fill="#666"/><rect x="531.6" y="39.2" width="6.8" height="5.2" rx="0.5" fill="#c4c4c4" stroke="#666" stroke-width="0.8"/><path d="M531.6 40.4h6.8" stroke="#666" stroke-width="1.2"/><path d="M533 42h4M533 43.2h4" stroke="#666" stroke-width="0.4"/><circle cx="618.9" cy="41.6" r="2.1" fill="none" stroke="#555" stroke-width="1.5"/><circle cx="618.9" cy="41.6" r="3" fill="none" stroke="#555" stroke-width="0.9" stroke-dasharray="1.1 1.25"/><path d="M714.2 43.6c1-0.8 1.2-1.8 1.2-3a2 2 0 0 1 4 0c0 1.2 0.2 2.2 1.2 3zM716.6 44.2a0.8 0.8 0 0 0 1.6 0z" fill="#555"/><path d="M874 39.2c1.8 0 3.3 1 3.3 2.3s-1.5 2.3-3.3 2.3c-0.4 0-0.8 0-1.1-0.1l-1.6 0.9 0.4-1.5c-0.6-0.4-1-1-1-1.600c0-1.3 1.500-2.300 3.300-2.300z" fill="none" stroke="#666" stroke-width="0.7"/><path d="M973.4 39.6h4v4.8a0.8 0.8 0 0 1-0.8 0.8h-2.400a0.800 0.800 0 0 1-0.800-0.800zM973.4 39.6a0.8 0.8 0 1 0-1.400 0.500M974.6 41.4h1.800M974.600 42.600h1.800M974.600 43.800h1.800" fill="none" stroke="#666" stroke-width="0.6"/></svg></div>
</div>
</body>
</html>
